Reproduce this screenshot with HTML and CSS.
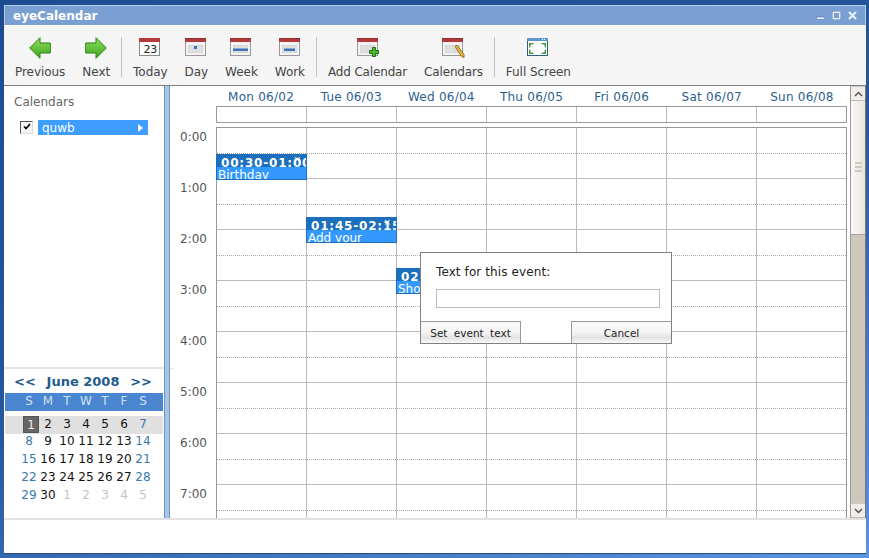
FILE: index.html
```html
<!DOCTYPE html>
<html lang="en">
<head>
    <meta charset="UTF-8">
    <title>eyeCalendar</title>
    <link rel="stylesheet" href="styles.css">
</head>
<body>

<svg class="defs" width="0" height="0">
    <defs>
        <linearGradient id="arrowFill" x1="0" y1="0" x2="0" y2="1">
            <stop offset="0" stop-color="#8fe05c"/>
            <stop offset="1" stop-color="#3ea320"/>
        </linearGradient>
        <symbol id="calBase" viewBox="0 0 21 18">
            <rect x="0.5" y="0.5" width="20" height="17" fill="#f3f3f3" stroke="#999"/>
            <rect x="0" y="0" width="21" height="4" fill="#b23a3a"/>
            <rect x="0" y="0" width="21" height="1" fill="#8e2c2c"/>
            <rect x="3" y="7" width="15" height="8" fill="#d2d2d2"/>
            <path d="M3 9H18M3 11H18M3 13H18M6 7V15M9 7V15M12 7V15M15 7V15" stroke="#ececec" stroke-width="0.7"/>
        </symbol>
    </defs>
</svg>

<div class="window">
    <div class="titlebar">
        <span class="title">eyeCalendar</span>
        <div class="win-buttons">
            <svg width="9" height="9" viewBox="0 0 9 9"><rect x="0.5" y="6" width="8" height="2.500" rx="1" fill="#e8eef8" stroke="#3f5f95" stroke-width="0.5"/></svg>
            <svg width="9" height="9" viewBox="0 0 9 9"><rect x="1" y="1" width="7" height="7" fill="none" stroke="#e8eef8" stroke-width="2"/><rect x="0.2" y="0.2" width="8.6" height="8.6" fill="none" stroke="#3f5f95" stroke-width="0.4"/></svg>
            <svg width="9" height="9" viewBox="0 0 9 9"><path d="M1 1L8 8M8 1L1 8" stroke="#e8eef8" stroke-width="2.200"/></svg>
        </div>
    </div>

    <div class="toolbar">
        <div class="tool">
            <svg class="icon arrow" width="22" height="22" viewBox="0 0 22 22"><path d="M0.700 11L11 0.700V6H21.300V16H11V21.300Z" fill="url(#arrowFill)" stroke="#2b7f1d"/></svg>
            <span>Previous</span>
        </div>
        <div class="tool">
            <svg class="icon arrow" width="22" height="22" viewBox="0 0 22 22"><path d="M21.300 11L11 0.700V6H0.700V16H11V21.300Z" fill="url(#arrowFill)" stroke="#2b7f1d"/></svg>
            <span>Next</span>
        </div>
        <div class="sep"></div>
        <div class="tool">
            <svg class="icon" width="21" height="18" viewBox="0 0 21 18"><rect x="0.5" y="0.5" width="20" height="17" fill="#fff" stroke="#8a8a8a"/><rect width="21" height="4" fill="#b23a3a"/></svg>
            <span class="icon-num">23</span>
            <span>Today</span>
        </div>
        <div class="tool">
            <svg class="icon" width="21" height="18" viewBox="0 0 21 18"><use href="#calBase"/><rect x="9" y="8" width="3" height="3" fill="#3a74c0"/></svg>
            <span>Day</span>
        </div>
        <div class="tool">
            <svg class="icon" width="21" height="18" viewBox="0 0 21 18"><use href="#calBase"/><rect x="3" y="10.500" width="15" height="2.500" fill="#3a74c0"/></svg>
            <span>Week</span>
        </div>
        <div class="tool">
            <svg class="icon" width="21" height="18" viewBox="0 0 21 18"><use href="#calBase"/><rect x="5" y="10.500" width="11" height="2.500" fill="#3a74c0"/></svg>
            <span>Work</span>
        </div>
        <div class="sep"></div>
        <div class="tool tight">
            <svg class="icon overflow" width="23" height="20" viewBox="0 0 23 20"><use href="#calBase" width="21" height="18"/><path d="M15.500 9.500h3v3h3v3h-3v3h-3v-3h-3v-3h3z" fill="#4cb82c" stroke="#1f6d14"/></svg>
            <span>Add Calendar</span>
        </div>
        <div class="tool tight">
            <svg class="icon overflow" width="23" height="20" viewBox="0 0 23 20"><use href="#calBase" width="21" height="18"/><path d="M13 8.500L15 7L22 16.500L22 19.500L19.500 18.500Z" fill="#e6b63a" stroke="#7c5a14" stroke-width="0.8"/></svg>
            <span>Calendars</span>
        </div>
        <div class="sep"></div>
        <div class="tool">
            <svg class="icon" width="21" height="18" viewBox="0 0 21 18"><rect x="0.5" y="0.5" width="20" height="17" fill="#fff" stroke="#2a5f7f"/><rect width="21" height="3" fill="#5f97d6"/><path d="M15 1.500H19" stroke="#fff" stroke-dasharray="1 1"/><g fill="#3f9a3a"><path d="M2 5H7L5.500 6.500H3.500V8.500L2 10Z"/><path d="M19 5H14L15.500 6.500H17.500V8.500L19 10Z"/><path d="M2 16H7L5.500 14.500H3.500V12.500L2 11Z"/><path d="M19 16H14L15.500 14.500H17.500V12.500L19 11Z"/></g></svg>
            <span>Full Screen</span>
        </div>
    </div>

    <div class="content">
        <div class="sidebar">
            <div class="cal-list">
                <div class="cal-heading">Calendars</div>
                <div class="cal-row">
                    <span class="checkbox">
                        <svg width="8" height="7" viewBox="0 0 8 7"><path d="M1 3.500L3 5.500L7 1" fill="none" stroke="#000" stroke-width="1.600"/></svg>
                    </span>
                    <div class="cal-name">quwb<span class="cal-arrow"></span></div>
                </div>
            </div>

            <div class="mini-cal">
                <div class="mini-title">
                    <span>&lt;&lt;</span>
                    <span>June 2008</span>
                    <span>&gt;&gt;</span>
                </div>
                <div class="mini-week mini-head">
                    <span>S</span><span>M</span><span>T</span><span>W</span><span>T</span><span>F</span><span>S</span>
                </div>
                <div class="mini-week first-week">
                    <span class="today">1</span><span>2</span><span>3</span><span>4</span><span>5</span><span>6</span><span class="weekend">7</span>
                </div>
                <div class="mini-week">
                    <span class="weekend">8</span><span>9</span><span>10</span><span>11</span><span>12</span><span>13</span><span class="weekend">14</span>
                </div>
                <div class="mini-week">
                    <span class="weekend">15</span><span>16</span><span>17</span><span>18</span><span>19</span><span>20</span><span class="weekend">21</span>
                </div>
                <div class="mini-week">
                    <span class="weekend">22</span><span>23</span><span>24</span><span>25</span><span>26</span><span>27</span><span class="weekend">28</span>
                </div>
                <div class="mini-week">
                    <span class="weekend">29</span><span>30</span><span class="other">1</span><span class="other">2</span><span class="other">3</span><span class="other">4</span><span class="other">5</span>
                </div>
            </div>
        </div>

        <div class="splitter"></div>

        <div class="main">
            <div class="day-heads">
                <span>Mon 06/02</span><span>Tue 06/03</span><span>Wed 06/04</span><span>Thu 06/05</span><span>Fri 06/06</span><span>Sat 06/07</span><span>Sun 06/08</span>
            </div>
            <div class="allday">
                <div></div><div></div><div></div><div></div><div></div><div></div><div></div>
            </div>

            <div class="schedule">
                <div class="hours">
                    <div>0:00</div><div>1:00</div><div>2:00</div><div>3:00</div><div>4:00</div><div>5:00</div><div>6:00</div><div>7:00</div>
                </div>
                <div class="grid">
                    <div class="day"><div></div><div></div><div></div><div></div><div></div><div></div><div></div><div></div></div>
                    <div class="day"><div></div><div></div><div></div><div></div><div></div><div></div><div></div><div></div></div>
                    <div class="day"><div></div><div></div><div></div><div></div><div></div><div></div><div></div><div></div></div>
                    <div class="day"><div></div><div></div><div></div><div></div><div></div><div></div><div></div><div></div></div>
                    <div class="day"><div></div><div></div><div></div><div></div><div></div><div></div><div></div><div></div></div>
                    <div class="day"><div></div><div></div><div></div><div></div><div></div><div></div><div></div><div></div></div>
                    <div class="day"><div></div><div></div><div></div><div></div><div></div><div></div><div></div><div></div></div>

                    <div class="event ev-birthday">
                        <div class="ev-time">00:30-01:00</div>
                        <div class="ev-text">Birthday</div>
                        <span class="ev-close">×</span>
                    </div>
                    <div class="event ev-addyour">
                        <div class="ev-time">01:45-02:15</div>
                        <div class="ev-text">Add your</div>
                        <span class="ev-close">×</span>
                    </div>
                    <div class="event ev-show">
                        <div class="ev-time">02:30-03:00</div>
                        <div class="ev-text">Show</div>
                    </div>
                </div>
            </div>

            <div class="dialog">
                <label for="eventText">Text for this event:</label>
                <input type="text" id="eventText">
                <div class="dialog-buttons">
                    <button type="button" class="btn-set">Set event text</button>
                    <button type="button" class="btn-cancel">Cancel</button>
                </div>
            </div>
        </div>

        <div class="scrollbar">
            <div class="scroll-btn">
                <svg width="9" height="6" viewBox="0 0 9 6"><path d="M1 5L4.500 1.500L8 5" fill="none" stroke="#555" stroke-width="1.500"/></svg>
            </div>
            <div class="scroll-thumb">
                <div class="grip"></div>
            </div>
            <div class="scroll-track"></div>
            <div class="scroll-btn">
                <svg width="9" height="6" viewBox="0 0 9 6"><path d="M1 1L4.500 4.500L8 1" fill="none" stroke="#555" stroke-width="1.500"/></svg>
            </div>
        </div>
    </div>

    <div class="footer"></div>
</div>

</body>
</html>
```

FILE: styles.css
```css
html, body {
    height: 100%;
}

body {
    margin: 0;
    padding: 5px 3px 4px 4px;
    box-sizing: border-box;
    overflow: hidden;
    font-family: "DejaVu Sans", sans-serif;
    font-size: 12px;
    background: linear-gradient(160deg, #1d4c92 0%, #25589e 50%, #5a95e0 100%);
}

.defs {
    position: absolute;
}

/* Window */
.window {
    height: 100%;
    display: flex;
    flex-direction: column;
    background: #fff;
    border-bottom: 1px solid #2c4c78;
    box-sizing: border-box;
}

.titlebar {
    height: 21px;
    flex: none;
    box-sizing: border-box;
    display: flex;
    align-items: center;
    justify-content: space-between;
    padding: 0 8px 0 8px;
    background: #7a9fd3;
    border: 1px solid #b9cde8;
    border-bottom-color: #fff;
}

.title {
    color: #fff;
    font-weight: bold;
    font-size: 12px;
}

.win-buttons {
    display: flex;
    gap: 7px;
}

/* Toolbar */
.toolbar {
    height: 60px;
    flex: none;
    box-sizing: border-box;
    display: flex;
    padding-left: 7px;
    background: #f5f5f5;
    border-bottom: 1px solid #808080;
    color: #444;
    letter-spacing: -0.05px;
}

.tool {
    position: relative;
    display: flex;
    flex-direction: column;
    align-items: center;
    justify-content: flex-end;
    padding: 0 4px 6px;
    margin-right: 9px;
}

.tool.tight {
    letter-spacing: -0.16px;
}

.tool .icon {
    position: absolute;
    top: 12px;
    left: 50%;
    margin-left: -11px;
}

.tool .arrow {
    top: 11px;
}

.icon-num {
    position: absolute;
    top: 17px;
    left: 0;
    right: 0;
    text-align: center;
    font-size: 11px;
    color: #222;
}

.sep {
    width: 1px;
    height: 40px;
    margin: 11px 7px 0 -2px;
    background: #c4c4c4;
}

/* Main layout */
.content {
    flex: none;
    height: 432px;
    display: flex;
}

.sidebar {
    width: 160px;
    flex: none;
    display: flex;
    flex-direction: column;
}

.cal-list {
    flex: 1;
    padding: 9px 0 0 10px;
    border-bottom: 2px solid #e4e4e4;
}

.cal-heading {
    color: #666;
    height: 17px;
}

.cal-row {
    display: flex;
    align-items: center;
    gap: 5px;
    margin: 8px 0 0 6px;
}

.checkbox {
    width: 13px;
    height: 13px;
    box-sizing: border-box;
    display: flex;
    align-items: flex-start;
    justify-content: center;
    padding-top: 1px;
    border: 1px solid #ddd;
    border-top-color: #555;
    border-left-color: #555;
    background: #f4f4f4;
}

.cal-name {
    width: 110px;
    height: 15px;
    box-sizing: border-box;
    display: flex;
    align-items: center;
    justify-content: space-between;
    padding: 0 5px 0 4px;
    background: #3f9dff;
    color: #fff;
}

.cal-arrow {
    border-left: 5px solid #fff;
    border-top: 4px solid transparent;
    border-bottom: 4px solid transparent;
}

/* Mini calendar */
.mini-cal {
    height: 149px;
    flex: none;
    box-sizing: border-box;
    padding: 5px 1px 0;
}

.mini-title {
    display: flex;
    justify-content: space-between;
    padding: 0 11px 0 9px;
    height: 19px;
    font-size: 13px;
    font-weight: bold;
    color: #235a8c;
}

.mini-week {
    display: grid;
    grid-template-columns: repeat(7, 19px);
    padding-left: 14.5px;
    width: 158px;
    box-sizing: border-box;
    height: 18px;
    text-align: center;
    line-height: 17px;
    color: #111;
}

.mini-head {
    background: #4a86cf;
    color: #cfe0f5;
    margin-bottom: 5px;
}

.first-week {
    background: #e0e0e0;
    margin-bottom: -1px;
}

.today {
    width: 16px;
    height: 17px;
    box-sizing: border-box;
    margin-left: 3.5px;
    background: #666;
    border: 1px solid #555;
    color: #eee;
    line-height: 16px;
}

.weekend {
    color: #3a78ae;
}

.other {
    color: #c4c4c4;
}

.splitter {
    width: 6px;
    flex: none;
    background: #a9c4e4;
    border-left: 1px solid #6f93c0;
    border-right: 1px solid #6f93c0;
    box-sizing: border-box;
}

/* Week view */
.main {
    position: relative;
    flex: 1;
    min-width: 0;
    overflow: hidden;
    padding-left: 46px;
}

.main::before {
    content: "";
    position: absolute;
    left: 0;
    top: 282px;
    width: 4px;
    border-top: 1px solid #e4e4e4;
}

.day-heads {
    display: flex;
    width: 631px;
    height: 20px;
    color: #2d5f8e;
    text-align: center;
    line-height: 23px;
    letter-spacing: 0.25px;
}

.day-heads span {
    flex: 1;
}

.allday {
    display: flex;
    width: 631px;
    height: 17px;
    box-sizing: border-box;
    border: 1px solid #999;
}

.allday div {
    flex: 1;
    border-left: 1px solid #bbb;
}

.allday div:first-child {
    border-left: 0;
}

.schedule {
    display: flex;
    margin: 4px 0 0 -46px;
}

.hours {
    width: 46px;
    flex: none;
    color: #555;
    padding-left: 10px;
    box-sizing: border-box;
}

.hours div {
    height: 51px;
    padding-top: 3px;
    box-sizing: border-box;
    font-size: 12px;
}

.grid {
    position: relative;
    display: flex;
    width: 631px;
    border-top: 1px solid #999;
    border-right: 1px solid #999;
    box-sizing: border-box;
}

.day {
    flex: 1;
    border-left: 1px solid #bbb;
}

.day:first-child {
    border-left: 1px solid #999;
}

.day div {
    position: relative;
    height: 51px;
    box-sizing: border-box;
    border-bottom: 1px solid #bbb;
}

.day div::before {
    content: "";
    position: absolute;
    left: 0;
    right: 0;
    top: 25px;
    border-top: 1px dotted #aaa;
}

/* Events */
.event {
    position: absolute;
    width: 91px;
    height: 26px;
    box-sizing: border-box;
    overflow: hidden;
    background: #3399ff;
    border: 1px solid #1b6fbd;
    color: #fff;
}

.ev-birthday {
    left: 0;
    top: 26px;
}

.ev-addyour {
    left: 90px;
    top: 89px;
}

.ev-show {
    left: 180px;
    top: 140px;
}

.ev-time {
    height: 12px;
    padding-left: 4px;
    background: #1b6fbd;
    font-size: 12px;
    font-weight: bold;
    line-height: 16px;
    letter-spacing: 0.8px;
    white-space: nowrap;
    overflow: hidden;
}

.ev-text {
    padding-left: 1px;
    line-height: 16px;
    white-space: nowrap;
}

.ev-close {
    position: absolute;
    right: 5px;
    top: 0;
    font-size: 9px;
    line-height: 9px;
    color: #fff;
}

/* Dialog */
.dialog {
    position: absolute;
    left: 250px;
    top: 166px;
    width: 252px;
    height: 92px;
    box-sizing: border-box;
    display: flex;
    flex-direction: column;
    padding: 12px 0 0;
    background: #fff;
    border: 1px solid #808080;
    color: #222;
    letter-spacing: 0.1px;
}

.dialog label {
    margin-left: 15px;
    height: 24px;
}

.dialog input {
    width: 224px;
    height: 19px;
    box-sizing: border-box;
    margin: 0 0 0 15px;
    border: 1px solid #bbb;
    padding: 0 3px;
}

.dialog-buttons {
    display: flex;
    justify-content: space-between;
    margin-top: auto;
}

.dialog button {
    width: 100px;
    height: 22px;
    font-family: "DejaVu Sans", sans-serif;
    font-size: 10.5px;
    color: #222;
    padding: 1px 0 0;
    background: linear-gradient(#fafafa 0%, #f4f4f4 50%, #e2e2e2 75%, #fafafa 100%);
    border: 1px solid #999;
    border-bottom: 0;
}

.dialog .btn-set {
    border-left: 0;
    word-spacing: 3px;
}

.dialog .btn-cancel {
    border-right: 0;
}

/* Scrollbar */
.scrollbar {
    width: 16px;
    flex: none;
    display: flex;
    flex-direction: column;
    box-sizing: border-box;
    border-left: 1px solid #999;
    border-right: 1px solid #777;
}

.scroll-btn {
    height: 15px;
    flex: none;
    display: flex;
    align-items: center;
    justify-content: center;
    background: #f1eee9;
    border-top: 1px solid #ccc;
    border-bottom: 1px solid #bbb;
    box-sizing: border-box;
}

.scroll-thumb {
    height: 134px;
    flex: none;
    display: flex;
    align-items: center;
    justify-content: center;
    background: linear-gradient(90deg, #fbfaf8, #e9e4dd);
    border-bottom: 1px solid #a8a298;
    box-sizing: border-box;
}

.grip {
    width: 7px;
    height: 11px;
    background: repeating-linear-gradient(#cfcabf 0 2px, transparent 2px 4px);
}

.scroll-track {
    flex: 1;
    background: #cfc7bb;
}

.footer {
    flex: 1;
    border-top: 2px solid #e2e2e2;
    background: #fff;
}
```
